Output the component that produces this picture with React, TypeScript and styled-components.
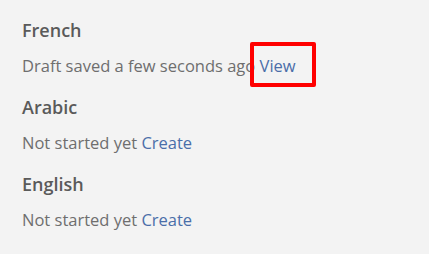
import React from "react";
import styled, { createGlobalStyle } from "styled-components";

const GlobalStyle = createGlobalStyle`
  html, body {
    margin: 0;
    padding: 0;
    background: #f3f3f3;
  }
  body {
    font-family: "Open Sans", "Liberation Sans", sans-serif;
  }
`;

const Panel = styled.div`
  width: 429px;
  height: 254px;
  box-sizing: border-box;
  padding: 18px 22px 0;
  background: #f3f3f3;
  display: flex;
  flex-direction: column;
  gap: 18px;
`;

const Language = styled.div`
  display: flex;
  flex-direction: column;
  gap: 13px;
`;

const Title = styled.div`
  font-size: 18px;
  line-height: 24px;
  font-weight: 600;
  color: #5a5a5a;
`;

const Status = styled.div`
  font-size: 16.5px;
  line-height: 22px;
  color: #6e6e6e;
  white-space: nowrap;
`;

const Action = styled.a`
  color: #4a6ea9;
  text-decoration: none;
  cursor: pointer;
`;

const Highlight = styled.span`
  position: relative;
  &::after {
    content: "";
    position: absolute;
    left: -10px;
    width: 66px;
    top: -12px;
    bottom: -10px;
    box-sizing: border-box;
    border: 4px solid #ff0000;
    border-radius: 2px;
  }
`;

interface Item {
  name: string;
  status: string;
  action: string;
  highlighted?: boolean;
}

const items: Item[] = [
  { name: "French", status: "Draft saved a few seconds ago", action: "View", highlighted: true },
  { name: "Arabic", status: "Not started yet", action: "Create" },
  { name: "English", status: "Not started yet", action: "Create" },
];

export default function App() {
  return (
    <>
      <GlobalStyle />
      <Panel>
        {items.map((item) => (
          <Language key={item.name}>
            <Title>{item.name}</Title>
            <Status>
              {item.status}{" "}
              {item.highlighted ? (
                <Highlight>
                  <Action>{item.action}</Action>
                </Highlight>
              ) : (
                <Action>{item.action}</Action>
              )}
            </Status>
          </Language>
        ))}
      </Panel>
    </>
  );
}
